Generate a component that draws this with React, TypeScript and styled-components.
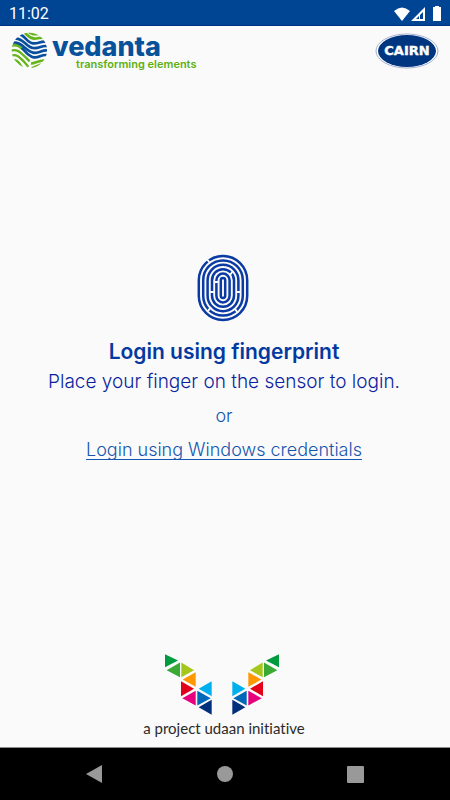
import React from "react";
import styled, { createGlobalStyle } from "styled-components";

const GlobalStyle = createGlobalStyle`
  * { box-sizing: border-box; }
  body { margin: 0; background: #fafafa; font-family: Inter, "Liberation Sans", sans-serif; }
`;

const Screen = styled.div`
  min-height: 100vh;
  display: flex;
  flex-direction: column;
  background: #fafafa;
`;

const StatusBar = styled.div`
  height: 26px;
  flex: none;
  display: flex;
  align-items: center;
  justify-content: space-between;
  padding: 2px 8px 0 9px;
  background: #004494;
  border-bottom: 1px solid #002f86;
  color: #fff;
  font: 400 16px/24px Roboto, sans-serif;
`;

const StatusIcons = styled.svg`
  display: block;
  width: 48px;
  height: 16px;
`;

const Header = styled.header`
  display: flex;
  align-items: flex-start;
  justify-content: space-between;
  padding: 6px 11px 0;
`;

const Brand = styled.div`
  display: flex;
  gap: 4px;
`;

const BrandText = styled.div`
  display: flex;
  flex-direction: column;
  padding-top: 3px;
`;

const BrandName = styled.span`
  color: #07529b;
  font-size: 27px;
  font-weight: 800;
  line-height: 24px;
`;

const Tagline = styled.span`
  padding-left: 24px;
  color: #5cb014;
  font-size: 11px;
  font-weight: 600;
  line-height: 10px;
`;

const Main = styled.main`
  flex: 1;
  display: flex;
  flex-direction: column;
  align-items: center;
  justify-content: center;
  padding: 0 18px 7px 16px;
  text-align: center;
`;

const SensorIcon = styled.svg`
  display: block;
  width: 52px;
  height: 68px;
  margin: 0 2px 14px 0;
`;

const Title = styled.h1`
  margin: 0;
  color: #0339a0;
  font-size: 21px;
  font-weight: 600;
  line-height: 32px;
`;

const Hint = styled.p`
  margin: 0;
  color: #0a1fa0;
  font-size: 19px;
  font-weight: 300;
  line-height: 28px;
`;

const Alternative = styled.p`
  margin: 6px 0;
  color: #1557ae;
  font-size: 18px;
  font-weight: 300;
  line-height: 28px;
`;

const CredentialsLink = styled.a`
  color: #1557ae;
  font-size: 18px;
  font-weight: 300;
  line-height: 28px;
  text-decoration: underline;
  text-decoration-thickness: 1px;
  text-underline-offset: 3px;
  text-decoration-skip-ink: none;
`;

const Footer = styled.footer`
  display: flex;
  flex-direction: column;
  align-items: center;
  gap: 3px;
  padding: 0 2px 9px 0;
`;

const Wings = styled.svg`
  display: block;
  width: 114px;
  height: 61px;
  margin-right: 4px;
`;

const Initiative = styled.span`
  color: #2b2b2b;
  font: 400 15px/20px Lato, sans-serif;
  font-variant-ligatures: none;
`;

const NavBar = styled.nav`
  height: 53px;
  flex: none;
  display: grid;
  grid-template-columns: repeat(3, 130px);
  justify-content: center;
  background: #000;
  border-top: 1px solid #8c8c8c;
`;

const NavButton = styled.button`
  display: flex;
  align-items: center;
  justify-content: center;
  padding: 0;
  border: 0;
  background: none;
  color: #999;
`;

const CairnLogo = styled.svg`
  display: block;
  width: 64px;
  height: 38px;
`;

const Globe = () => (
  <svg width="37" height="37" viewBox="0 0 111 111" aria-hidden="true">
    <defs>
      <clipPath id="globe"><circle cx="55" cy="55" r="53" /></clipPath>
    </defs>
    <g clipPath="url(#globe)" fill="none">
      <g stroke="#67b51c" strokeWidth="8">
        <path d="M40 2C48 6 54 20 70 20S90 13 106 19" />
        <path d="M52 -2C60 8 70 8 92 4" />
        <path d="M0 41C18 36 26 43 36 52" />
        <path d="M0 56C20 49 30 64 42 74L56 88" strokeWidth="7" />
        <path d="M0 71C18 64 28 78 38 88L52 104" strokeWidth="7" />
        <path d="M4 86C18 80 26 94 36 112" strokeWidth="7" />
        <path d="M60 94C70 96 86 82 112 85" />
        <path d="M62 108C72 107 84 95 104 97" />
      </g>
      <g stroke="#0a4f9d" strokeWidth="8">
        <path d="M26 8C42 10 48 32 66 34S90 25 108 30" />
        <path d="M12 20C36 17 46 45 66 48S92 38 112 43" />
        <path d="M4 32C32 27 44 58 66 62S92 51 112 56" />
        <path d="M32 48C42 56 52 73 68 76S92 65 112 70" />
      </g>
    </g>
  </svg>
);

const rings = [
  { w: 24.2, h: 32 }, { w: 19.8, h: 27.6 }, { w: 15.4, h: 23.2 },
  { w: 11, h: 18.8 }, { w: 6.6, h: 14.4 }, { w: 2.2, h: 10 },
];

const Fingerprint = () => (
  <SensorIcon viewBox="-26 -34 52 68" role="img" aria-label="Fingerprint">
    <g fill="none" stroke="#0a3aa4" strokeWidth="2.5">
      {rings.map(({ w, h }) => (
        <rect key={w} x={-w} y={-h} width={w * 2} height={h * 2} rx={w} />
      ))}
    </g>
    <g stroke="#fafafa" strokeWidth="2">
      <path d="M-17-30l4 5M7-13l3-4M-13 4h4M13 4h4M-8-6h3M-15 23l3-4M12 21l3 4" />
    </g>
  </SensorIcon>
);

const wing: [string, string][] = [
  ["#009b3e", "30,29 30,68 69,48"],
  ["#3aaa35", "75,54 75,98 35,77"],
  ["#a5c71a", "79,54 79,98 117,77"],
  ["#ff9800", "122,83 122,127 83,105"],
  ["#e3001b", "78,110 78,155 117,133"],
  ["#00b0ee", "170,110 170,155 131,133"],
  ["#e6007e", "122,139 122,183 82,161"],
  ["#0068b9", "127,139 127,183 167,161"],
  ["#002f7c", "170,166 170,211 131,188"],
];

const WingShape = () => (
  <>{wing.map(([fill, points]) => <polygon key={fill} fill={fill} points={points} />)}</>
);

export default function App() {
  return (
    <Screen>
      <GlobalStyle />
      <StatusBar>
        <span>11:02</span>
        <StatusIcons viewBox="0 0 48 16" fill="#fff" aria-hidden="true">
          <path d="M0 5Q8-2 16 5L8 15Z" />
          <path fillRule="evenodd" d="M31 1V15H17ZM29 6L26 9V13H29ZM25 10L22 13H25Z" />
          <path d="M41 1V0H45V1H47V15H39V1Z" />
        </StatusIcons>
      </StatusBar>
      <Header>
        <Brand>
          <Globe />
          <BrandText>
            <BrandName>vedanta</BrandName>
            <Tagline>transforming elements</Tagline>
          </BrandText>
        </Brand>
        <CairnLogo viewBox="0 0 64 38" role="img" aria-label="Cairn">
          <ellipse cx="32" cy="19" rx="31" ry="17" fill="#fff" stroke="#a5afd0" />
          <ellipse cx="32" cy="19" rx="29" ry="16" fill="#003580" />
          <text x="32" y="23" textAnchor="middle" fill="#fff" stroke="#fff" strokeWidth="0.4" fontFamily="DejaVu Sans, sans-serif" fontSize="13" fontWeight="700">CAIRN</text>
        </CairnLogo>
      </Header>
      <Main>
        <Fingerprint />
        <Title>Login using fingerprint</Title>
        <Hint>Place your finger on the sensor to login.</Hint>
        <Alternative>or</Alternative>
        <CredentialsLink href="#credentials">Login using Windows credentials</CredentialsLink>
      </Main>
      <Footer>
        <Wings viewBox="30 29 342 182" aria-hidden="true">
          <WingShape />
          <g transform="translate(402 0) scale(-1 1)"><WingShape /></g>
        </Wings>
        <Initiative>a project udaan initiative</Initiative>
      </Footer>
      <NavBar>
        <NavButton aria-label="Back">
          <svg width="18" height="20" viewBox="0 0 18 20" fill="currentColor"><path d="M0 10L16 1V19Z" /></svg>
        </NavButton>
        <NavButton aria-label="Home">
          <svg width="16" height="16" viewBox="0 0 16 16" fill="currentColor"><circle cx="8" cy="8" r="8" /></svg>
        </NavButton>
        <NavButton aria-label="Recent apps">
          <svg width="17" height="17" viewBox="0 0 17 17" fill="currentColor"><rect width="17" height="17" rx="1" /></svg>
        </NavButton>
      </NavBar>
    </Screen>
  );
}
